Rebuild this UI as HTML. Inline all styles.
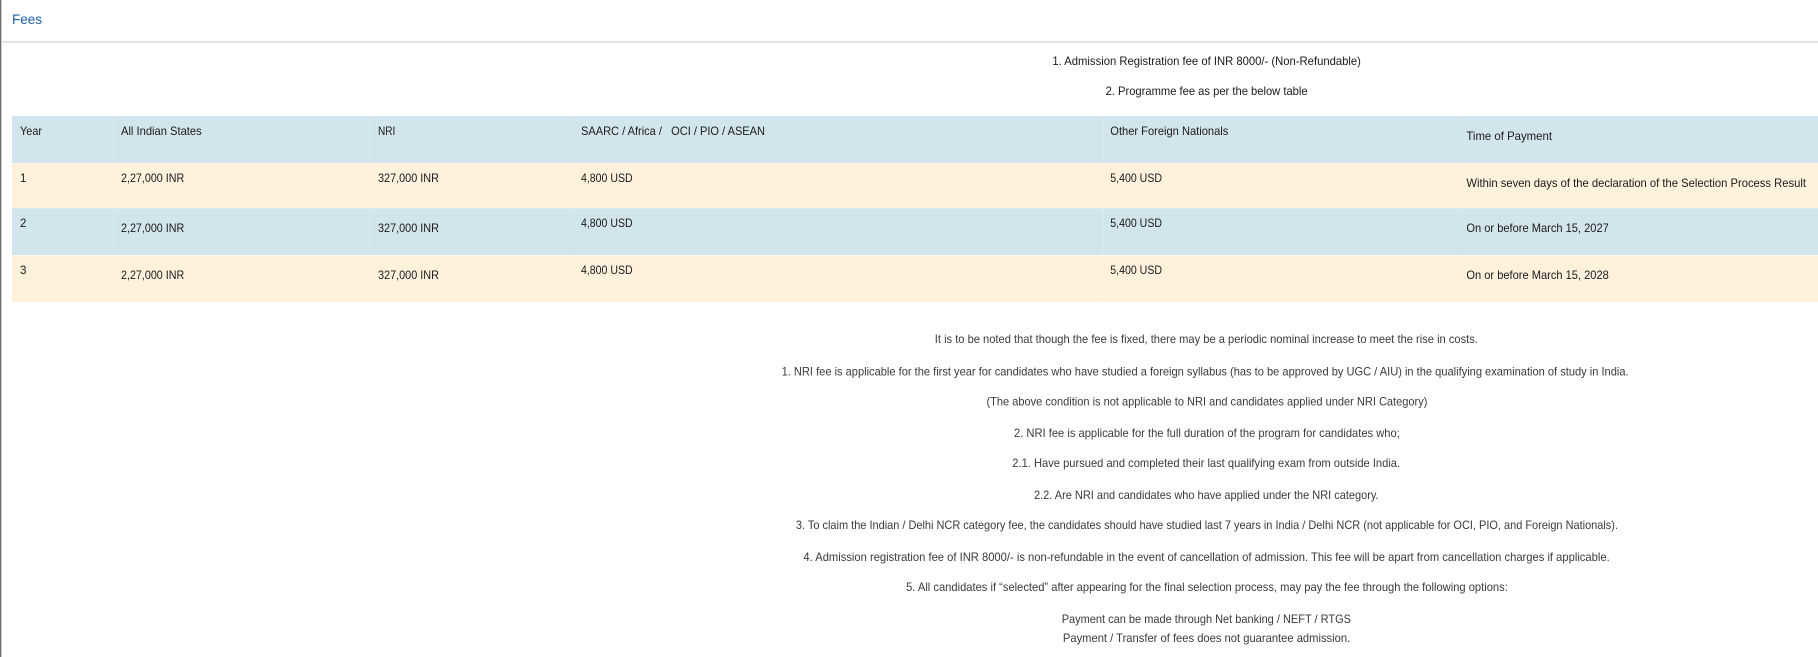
<!DOCTYPE html>
<html lang="en">
<head>
<meta charset="utf-8">
<title>Fees</title>
<style>
html,body{margin:0;padding:0;background:#fff;width:1818px;height:657px;overflow:hidden}
svg{position:absolute;left:0;top:0;display:block}
text{font-family:"Liberation Sans",Arial,sans-serif;font-size:12px;fill:#222;white-space:pre}
.t{fill:#1a1a1a}
.d{font-size:11.5px}
.l{fill:#3a3a3a}
.txt{filter:blur(.25px)}
</style>
</head>
<body>
<svg width="1818" height="657" viewBox="0 0 1818 657" xmlns="http://www.w3.org/2000/svg">
<rect x="0" y="0" width="1.3" height="657" fill="#6b6b6b"/>
<rect x="2" y="41" width="1816" height="2" fill="#e3e3e9"/>

<rect x="12" y="116" width="1806" height="47" fill="#d3e5ec"/>
<rect x="12" y="163" width="1806" height="45" fill="#fff1dc"/>
<rect x="12" y="208" width="1806" height="47" fill="#d3e5ec"/>
<rect x="12" y="255" width="1806" height="47" fill="#fff1dc"/>
<g fill="#ffffff" fill-opacity=".18">
<rect x="113" y="116" width="1" height="186"/>
<rect x="369" y="116" width="1" height="186"/>
<rect x="573" y="116" width="1" height="186"/>
<rect x="1103" y="116" width="1" height="186"/>
<rect x="1458" y="116" width="1" height="186"/>
</g>
<rect x="12" y="163" width="1806" height="1" fill="#fff" fill-opacity=".2"/>
<rect x="12" y="208" width="1806" height="1" fill="#fff" fill-opacity=".2"/>
<rect x="12" y="255" width="1806" height="1" fill="#fff" fill-opacity=".2"/>

<g class="txt">
<text x="12" y="24" textLength="30" lengthAdjust="spacingAndGlyphs" style="font-size:14px;fill:#1f5fa6">Fees</text>

<text class="t" x="1052.4" y="65" textLength="308.5" lengthAdjust="spacingAndGlyphs">1. Admission Registration fee of INR 8000/- (Non-Refundable)</text>
<text class="t" x="1105.6" y="95" textLength="202" lengthAdjust="spacingAndGlyphs">2. Programme fee as per the below table</text>

<text class="t" x="20" y="135" textLength="22" lengthAdjust="spacingAndGlyphs">Year</text>
<text class="t" x="121" y="135" textLength="80.7" lengthAdjust="spacingAndGlyphs">All Indian States</text>
<text class="t" x="378" y="135" textLength="17.3" lengthAdjust="spacingAndGlyphs">NRI</text>
<text class="t" x="581" y="135" textLength="184" lengthAdjust="spacingAndGlyphs" xml:space="preserve">SAARC / Africa /   OCI / PIO / ASEAN</text>
<text class="t" x="1110.3" y="135" textLength="118" lengthAdjust="spacingAndGlyphs">Other Foreign Nationals</text>
<text class="t" x="1466.4" y="140" textLength="85.6" lengthAdjust="spacingAndGlyphs">Time of Payment</text>

<text class="t d" x="20" y="182">1</text>
<text class="t" x="121" y="182" textLength="63.2" lengthAdjust="spacingAndGlyphs">2,27,000 INR</text>
<text class="t" x="378" y="182" textLength="61" lengthAdjust="spacingAndGlyphs">327,000 INR</text>
<text class="t" x="581" y="182" textLength="51.6" lengthAdjust="spacingAndGlyphs">4,800 USD</text>
<text class="t" x="1110.3" y="182" textLength="51.7" lengthAdjust="spacingAndGlyphs">5,400 USD</text>
<text class="t" x="1466.4" y="187" textLength="339.6" lengthAdjust="spacingAndGlyphs">Within seven days of the declaration of the Selection Process Result</text>

<text class="t d" x="20" y="227">2</text>
<text class="t" x="121" y="232" textLength="63.2" lengthAdjust="spacingAndGlyphs">2,27,000 INR</text>
<text class="t" x="378" y="232" textLength="61" lengthAdjust="spacingAndGlyphs">327,000 INR</text>
<text class="t" x="581" y="227" textLength="51.6" lengthAdjust="spacingAndGlyphs">4,800 USD</text>
<text class="t" x="1110.3" y="227" textLength="51.7" lengthAdjust="spacingAndGlyphs">5,400 USD</text>
<text class="t" x="1466.4" y="232" textLength="142.4" lengthAdjust="spacingAndGlyphs">On or before March 15, 2027</text>

<text class="t d" x="20" y="274">3</text>
<text class="t" x="121" y="279" textLength="63.2" lengthAdjust="spacingAndGlyphs">2,27,000 INR</text>
<text class="t" x="378" y="279" textLength="61" lengthAdjust="spacingAndGlyphs">327,000 INR</text>
<text class="t" x="581" y="274" textLength="51.6" lengthAdjust="spacingAndGlyphs">4,800 USD</text>
<text class="t" x="1110.3" y="274" textLength="51.7" lengthAdjust="spacingAndGlyphs">5,400 USD</text>
<text class="t" x="1466.4" y="279" textLength="142.4" lengthAdjust="spacingAndGlyphs">On or before March 15, 2028</text>

<text class="l" x="934.8" y="343" textLength="543.1" lengthAdjust="spacingAndGlyphs">It is to be noted that though the fee is fixed, there may be a periodic nominal increase to meet the rise in costs.</text>
<text class="l" x="781.6" y="375.5" textLength="847" lengthAdjust="spacingAndGlyphs">1. NRI fee is applicable for the first year for candidates who have studied a foreign syllabus (has to be approved by UGC / AIU) in the qualifying examination of study in India.</text>
<text class="l" x="986.5" y="405.5" textLength="440.9" lengthAdjust="spacingAndGlyphs">(The above condition is not applicable to NRI and candidates applied under NRI Category)</text>
<text class="l" x="1014" y="437" textLength="385.8" lengthAdjust="spacingAndGlyphs">2. NRI fee is applicable for the full duration of the program for candidates who;</text>
<text class="l" x="1012.3" y="467" textLength="387.8" lengthAdjust="spacingAndGlyphs">2.1. Have pursued and completed their last qualifying exam from outside India.</text>
<text class="l" x="1034" y="499" textLength="344.6" lengthAdjust="spacingAndGlyphs">2.2. Are NRI and candidates who have applied under the NRI category.</text>
<text class="l" x="795.9" y="529" textLength="822.1" lengthAdjust="spacingAndGlyphs">3. To claim the Indian / Delhi NCR category fee, the candidates should have studied last 7 years in India / Delhi NCR (not applicable for OCI, PIO, and Foreign Nationals).</text>
<text class="l" x="803.4" y="561" textLength="806.3" lengthAdjust="spacingAndGlyphs">4. Admission registration fee of INR 8000/- is non-refundable in the event of cancellation of admission. This fee will be apart from cancellation charges if applicable.</text>
<text class="l" x="906.1" y="591" textLength="601.7" lengthAdjust="spacingAndGlyphs">5. All candidates if “selected” after appearing for the final selection process, may pay the fee through the following options:</text>
<text class="l" x="1061.7" y="623" textLength="289.3" lengthAdjust="spacingAndGlyphs">Payment can be made through Net banking / NEFT / RTGS</text>
<text class="l" x="1062.9" y="642" textLength="287.3" lengthAdjust="spacingAndGlyphs">Payment / Transfer of fees does not guarantee admission.</text>
</g>
</svg>
</body>
</html>
